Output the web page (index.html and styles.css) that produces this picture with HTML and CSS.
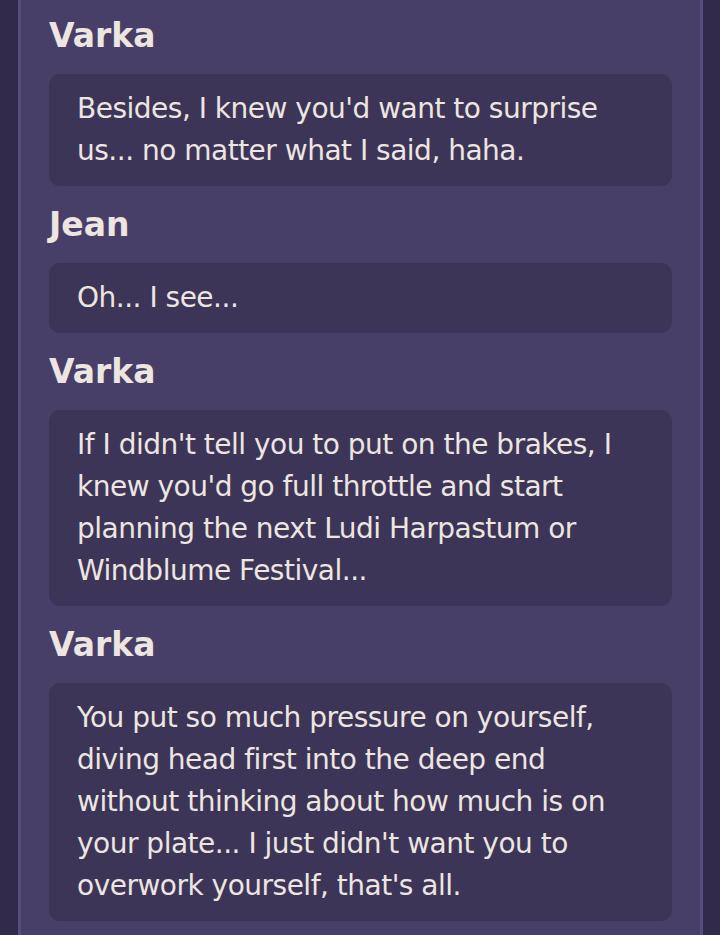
FILE: index.html
```html
<!DOCTYPE html>
<html lang="en">
<head>
<meta charset="utf-8">
<title>Chat</title>
<link rel="stylesheet" href="styles.css">
</head>
<body>
<main class="panel">
  <section class="entry">
    <h2 class="speaker">Varka</h2>
    <p class="bubble">Besides, I knew you'd want to surprise us... no matter what I said, haha.</p>
  </section>
  <section class="entry">
    <h2 class="speaker">Jean</h2>
    <p class="bubble">Oh... I see...</p>
  </section>
  <section class="entry">
    <h2 class="speaker">Varka</h2>
    <p class="bubble">If I didn't tell you to put on the brakes, I knew you'd go full throttle and start planning the next Ludi Harpastum or Windblume Festival...</p>
  </section>
  <section class="entry">
    <h2 class="speaker">Varka</h2>
    <p class="bubble">You put so much pressure on yourself, diving head first into the deep end without thinking about how much is on your plate... I just didn't want you to overwork yourself, that's all.</p>
  </section>
</main>
</body>
</html>
```
FILE: styles.css
```css
html, body {
  margin: 0;
  padding: 0;
  background: #312a4a;
  height: 100%;
  overflow: hidden;
}
.panel {
  box-sizing: border-box;
  width: 685px;
  min-height: 100%;
  margin-left: 18px;
  background: #483f69;
  border-left: 3px solid #564c82;
  border-right: 3px solid #564c82;
  padding: 9px 28px 20px;
  font-family: "DejaVu Sans", sans-serif;
  color: #ede5e0;
}
.entry {
  display: flex;
  flex-direction: column;
}
.speaker {
  margin: 0 0 12px;
  font-size: 33px;
  line-height: 53px;
  font-weight: 700;
  color: #ede5e0;
}
.bubble {
  margin: 0 0 12px;
  background: #3c3558;
  border-radius: 11px;
  padding: 14px 28px;
  font-size: 28px;
  line-height: 42px;
  letter-spacing: -0.5px;
}
```
